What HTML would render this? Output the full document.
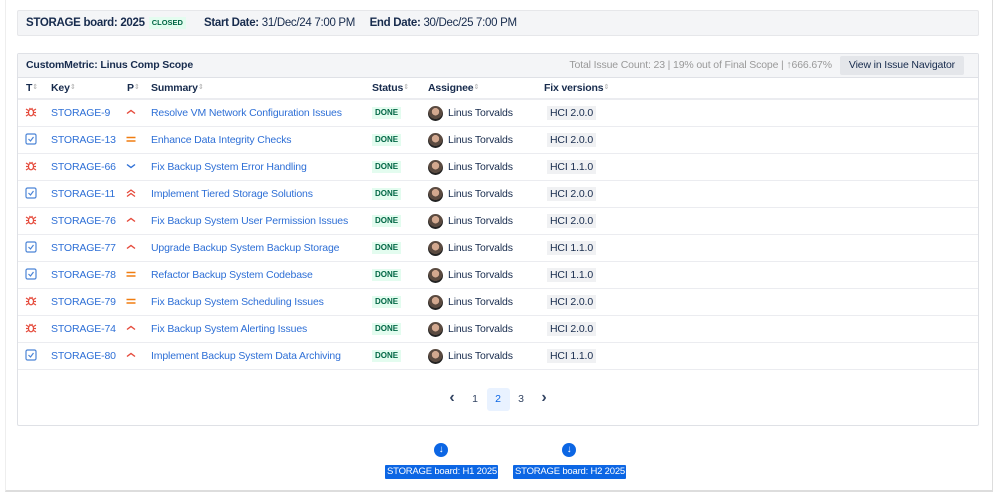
<!DOCTYPE html>
<html><head><style>
*{box-sizing:border-box;margin:0;padding:0}
body{width:999px;height:503px;background:#fff;font-family:"Liberation Sans",sans-serif;font-size:10.5px;letter-spacing:-0.15px;color:#172b4d;position:relative;overflow:hidden}
.outer{position:absolute;left:5px;top:0;width:988px;height:492px;border-right:1px solid #ddd;border-bottom:2px solid #ddd;border-left:1px solid #eee}
.hdr{position:absolute;left:17px;top:10px;width:962px;height:26px;background:#f4f5f7;border:1px solid #e6e7ea;border-radius:2px;font-size:11.5px;letter-spacing:-0.3px;line-height:24px;padding-left:8px;white-space:nowrap}
.lz{display:inline-block;background:#e3fcef;color:#006644;font-size:7.5px;font-weight:bold;padding:0 3px;line-height:12px;vertical-align:1px;margin:0 18px 0 4px;letter-spacing:0}
.box{position:absolute;left:17px;top:53px;width:962px;height:373px;border:1px solid #dfe1e6;border-radius:2px}
.title{height:24px;background:#f4f5f7;line-height:23px;padding-left:8px;font-weight:bold;font-size:10.5px;border-bottom:1px solid #dfe1e6;position:relative}
.title .r{position:absolute;right:14px;top:2px;font-weight:normal;color:#999;font-size:10.5px;line-height:19px;white-space:nowrap}
.btn{display:inline-block;background:#e4e6ea;color:#172b4d;padding:0 9px;margin-left:8px;border-radius:2px;font-size:10.5px}
.row{position:absolute;left:0;width:960px;height:27px;border-bottom:1px solid #ebecf0;line-height:27px;white-space:nowrap}
.row span{position:absolute}
.h{font-weight:bold;height:22px;line-height:20px;border-bottom:2px solid #ebecf0}
.s{color:#aaa;font-size:7px;font-weight:normal}
a{color:#2e6fd6;text-decoration:none}
.done{background:#e3fcef;color:#006644;font-size:8px;font-weight:bold;line-height:12px;padding:0 3px;top:7px;letter-spacing:0}
.av{width:15px;height:15px;border-radius:50%;background:radial-gradient(circle at 50% 38%,#d2a88f 0 30%,#5a4a40 32% 60%,#222 62%);top:6px}
.ver{background:#f0f1f3;line-height:14px;padding:0 3px;top:6px;font-size:10.5px}
.pg{position:absolute;top:333px;left:0;width:960px;text-align:center;font-size:10.5px}
.pg span{display:inline-block;width:23px;height:23px;line-height:23px;color:#344563}
.pg .c{font-size:16px;font-weight:bold;line-height:21px}
.pg .on{background:#e9f2ff;color:#0c66e4;border-radius:3px}
.dl{position:absolute;width:14px;height:14px;border-radius:50%;background:#0c66e4;color:#fff;font-size:10px;text-align:center;line-height:14px;font-weight:bold}
.lab{position:absolute;top:465px;background:#0c66e4;color:#fff;font-size:9.5px;letter-spacing:-0.2px;line-height:14px;padding:0 2px;border-radius:1px;width:113px;text-align:center;white-space:nowrap}
</style></head><body>
<div class="outer"></div>
<div class="hdr"><b>STORAGE board: 2025</b><span class="lz">CLOSED</span><b>Start Date:</b> 31/Dec/24 7:00 PM &nbsp;&nbsp;&nbsp; <b>End Date:</b> 30/Dec/25 7:00 PM</div>
<div class="box">
<div class="title">CustomMetric: Linus Comp Scope<div class="r">Total Issue Count: 23 | 19% out of Final Scope | ↑666.67%<span class="btn">View in Issue Navigator</span></div></div>
<div class="row h" style="top:24px"><span style="left:8px">T<span class="s">⇕</span></span><span style="left:33px">Key<span class="s">⇕</span></span><span style="left:109px">P<span class="s">⇕</span></span><span style="left:133px">Summary<span class="s">⇕</span></span><span style="left:354px">Status<span class="s">⇕</span></span><span style="left:410px">Assignee<span class="s">⇕</span></span><span style="left:526px">Fix versions<span class="s">⇕</span></span></div>
<div id="rows"></div>
<div class="pg"><span class="c">‹</span><span>1</span><span class="on">2</span><span>3</span><span class="c">›</span></div>
</div>
<div class="dl" style="left:434px;top:443px">↓</div>
<div class="dl" style="left:562px;top:443px">↓</div>
<div class="lab" style="left:385px">STORAGE board: H1 2025</div>
<div class="lab" style="left:513px">STORAGE board: H2 2025</div>
<script>
var d=[["b","STORAGE-9","h","Resolve VM Network Configuration Issues","2.0.0"],["t","STORAGE-13","m","Enhance Data Integrity Checks","2.0.0"],["b","STORAGE-66","l","Fix Backup System Error Handling","1.1.0"],["t","STORAGE-11","hh","Implement Tiered Storage Solutions","2.0.0"],["b","STORAGE-76","h","Fix Backup System User Permission Issues","2.0.0"],["t","STORAGE-77","h","Upgrade Backup System Backup Storage","1.1.0"],["t","STORAGE-78","m","Refactor Backup System Codebase","1.1.0"],["b","STORAGE-79","m","Fix Backup System Scheduling Issues","2.0.0"],["b","STORAGE-74","h","Fix Backup System Alerting Issues","2.0.0"],["t","STORAGE-80","h","Implement Backup System Data Archiving","1.1.0"]];
var icT={b:'<svg width="12" height="12" viewBox="0 0 12 12" fill="none" stroke="#e5493a" stroke-width="1.2"><ellipse cx="6" cy="6.5" rx="2.5" ry="3.3"/><path d="M1 3l2.5 1.5M11 3L8.5 4.5M1 6.5h2.5M11 6.5H8.5M1 10l2.5-1.5M11 10L8.5 8.5M4.5 2l1 1.2M7.5 2l-1 1.2"/></svg>',t:'<svg width="12" height="12" viewBox="0 0 12 12"><rect x="1" y="1" width="10" height="10" rx="1.5" fill="#fff" stroke="#4b84d6" stroke-width="1.2"/><path d="M3.5 6l2 2 3-4" fill="none" stroke="#4b84d6" stroke-width="1.2"/></svg>'};
var icP={h:'<svg width="12" height="12"><path d="M2 7.5l4-3 4 3" fill="none" stroke="#e5493a" stroke-width="1.4"/></svg>',hh:'<svg width="12" height="12"><path d="M2 6l4-3 4 3M2 9.5l4-3 4 3" fill="none" stroke="#e5493a" stroke-width="1.3"/></svg>',m:'<svg width="12" height="12"><path d="M1.5 4.5h9M1.5 8h9" stroke="#f07d10" stroke-width="1.5"/></svg>',l:'<svg width="12" height="12"><path d="M2 4.5l4 3 4-3" fill="none" stroke="#2e6fd6" stroke-width="1.4"/></svg>'};
var h="";d.forEach(function(r,i){h+='<div class="row" style="top:'+(46+i*27)+'px"><span style="left:7px;top:2px">'+icT[r[0]]+'</span><span style="left:33px"><a>'+r[1]+'</a></span><span style="left:107px;top:2px">'+icP[r[2]]+'</span><span style="left:133px"><a>'+r[3]+'</a></span><span class="done" style="left:354px">DONE</span><span class="av" style="left:410px"></span><span style="left:430px">Linus Torvalds</span><span class="ver" style="left:529px">HCI '+r[4]+'</span></div>'});
document.getElementById("rows").innerHTML=h;
</script>
</body></html>
